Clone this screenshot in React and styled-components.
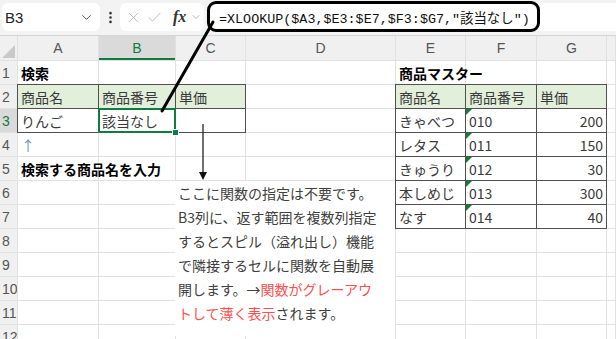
import React from 'react';
import styled, { createGlobalStyle } from 'styled-components';
import { ChevronDown, EllipsisVertical, X, Check } from 'lucide-react';

const GREEN = '#107c41';
const HEAD_FILL = '#e2efda';

const GlobalStyle = createGlobalStyle`
  html, body { margin: 0; padding: 0; background: #fff; }
  body { font-family: "Noto Sans CJK JP", "Noto Sans", sans-serif; }
`;

const Frame = styled.div`
  position: relative;
  width: 616px;
  height: 339px;
  overflow: hidden;
  background: #fff;
`;

// ---- formula bar ----
const TopBar = styled.div`
  display: flex;
  align-items: stretch;
  height: 36px;
  box-sizing: border-box;
  padding: 3px 0 4px 2px;
  background: #f3f3f3;
  border-bottom: 1px solid #d6d6d6;
`;

const NameBox = styled.div`
  width: 98px;
  display: flex;
  align-items: center;
  justify-content: space-between;
  padding: 0 6px 0 3px;
  box-sizing: border-box;
  background: #fff;
  border-radius: 6px;
  font-family: "Liberation Sans", Arial, sans-serif;
  font-size: 15px;
  color: #222;
`;

const Divider = styled.div`
  width: 20px;
  display: flex;
  align-items: center;
  justify-content: center;
  color: #333;
`;

const FxBox = styled.div`
  width: 84px;
  display: flex;
  align-items: center;
  gap: 4px;
  padding-left: 5px;
  box-sizing: border-box;
  background: #fff;
  border-radius: 6px;
  color: #b0b0b0;
`;

const Fx = styled.span`
  font-family: "Liberation Serif", serif;
  font-style: italic;
  font-weight: 700;
  font-size: 16px;
  color: #333;
  margin-left: 6px;
`;

const FormulaBar = styled.div`
  flex: 1;
  margin-left: 3px;
  display: flex;
  align-items: center;
  background: #fff;
  border-radius: 6px 0 0 6px;
`;

const FormulaText = styled.div`
  width: 333px;
  height: 31px;
  margin: -1px 0 0 0;
  box-sizing: border-box;
  border: 3px solid #000;
  border-radius: 9px;
  display: flex;
  align-items: center;
  padding-left: 9px;
  font-family: "Liberation Mono", "Noto Sans CJK JP", monospace;
  font-size: 13.4px;
  color: #111;
  white-space: nowrap;
`;

// ---- sheet ----
const Sheet = styled.div`
  display: grid;
  grid-template-columns: 17px 80px 76px 69px 149px 69px 70px 69px 8px;
  grid-template-rows: 24px repeat(12, 23px);
  gap: 1px;
  background: #e1e1e1;
`;

const Corner = styled.div`
  background: #f0f0f0;
  display: flex;
  align-items: flex-end;
  justify-content: flex-end;
  padding: 0 2px 2px 0;
  &::after {
    content: '';
    width: 0;
    height: 0;
    border-left: 13px solid transparent;
    border-bottom: 13px solid #c9c9c9;
  }
`;

const ColHead = styled.div`
  background: ${p => (p.$active ? '#dadada' : '#f0f0f0')};
  color: ${p => (p.$active ? GREEN : '#555')};
  box-shadow: ${p => (p.$active ? `inset 0 -2px 0 ${GREEN}` : 'none')};
  display: flex;
  align-items: center;
  justify-content: center;
  font-family: "Liberation Sans", Arial, sans-serif;
  font-size: 14px;
`;

const RowHead = styled.div`
  background: ${p => (p.$active ? '#dadada' : '#f0f0f0')};
  color: ${p => (p.$active ? GREEN : '#555')};
  display: flex;
  align-items: center;
  padding-left: 2px;
  font-family: "Liberation Sans", Arial, sans-serif;
  font-size: 14px;
  overflow: hidden;
`;

const Cell = styled.div`
  position: relative;
  z-index: ${p => p.$layer || 'auto'};
  background: ${p => p.$fill || '#fff'};
  display: flex;
  align-items: center;
  justify-content: ${p => (p.$right ? 'flex-end' : 'flex-start')};
  padding: 0 3px;
  font-size: 14px;
  line-height: 18px;
  font-weight: ${p => (p.$bold ? 700 : 400)};
  color: ${p => p.$color || (p.$bold ? '#000' : '#3a3a3a')};
  white-space: nowrap;
  outline: ${p =>
    p.$selected ? `2px solid ${GREEN}` : p.$boxed ? '1px solid #505050' : 'none'};
  outline-offset: ${p => (p.$selected ? '-1px' : '0')};

  ${p =>
    p.$flag &&
    `&::before {
      content: '';
      position: absolute;
      left: 0;
      top: 0;
      border-top: 6px solid #1a7a3a;
      border-right: 6px solid transparent;
    }`}

  ${p =>
    p.$selected &&
    `&::after {
      content: '';
      position: absolute;
      right: -4px;
      bottom: -4px;
      width: 5px;
      height: 5px;
      background: ${GREEN};
      border: 1px solid #fff;
    }`}
`;

// ---- annotation ----
const Overlay = styled.svg`
  position: absolute;
  left: 0;
  top: 0;
  width: 616px;
  height: 339px;
  pointer-events: none;
  z-index: 10;
`;

const Note = styled.div`
  position: absolute;
  left: 175px;
  top: 181px;
  width: 220px;
  height: 155px;
  box-sizing: border-box;
  padding-left: 3px;
  background: #fff;
  z-index: 9;
  font-family: "Noto Sans CJK JP", sans-serif;
  font-size: 14px;
  line-height: 24px;
  color: #404040;
`;

const NoteLine = styled.div`
  white-space: nowrap;
`;

const Red = styled.span`
  color: #ff4f4f;
`;

const COLS = ['A', 'B', 'C', 'D', 'E', 'F', 'G', 'H'];

const hdr = text => ({ text, fill: HEAD_FILL, boxed: true, layer: 1 });
const master = (name, code, price) => ({
  E: { text: name, boxed: true, layer: 1 },
  F: { text: code, boxed: true, layer: 1, flag: true },
  G: { text: price, boxed: true, layer: 1, right: true },
});

const rows = [
  { A: { text: '検索', bold: true }, E: { text: '商品マスター', bold: true, layer: 2 } },
  { A: hdr('商品名'), B: hdr('商品番号'), C: hdr('単価'), E: hdr('商品名'), F: hdr('商品番号'), G: hdr('単価') },
  {
    A: { text: 'りんご', boxed: true, layer: 1 },
    B: { text: '該当なし', boxed: true, selected: true, layer: 3 },
    C: { boxed: true, layer: 1 },
    ...master('きゃべつ', '010', '200'),
  },
  { A: { text: '↑', color: '#7d8ea3' }, ...master('レタス', '011', '150') },
  { A: { text: '検索する商品名を入力', bold: true, layer: 2 }, ...master('きゅうり', '012', '30') },
  master('本しめじ', '013', '300'),
  master('なす', '014', '40'),
  {}, {}, {}, {}, {},
];

export default function App() {
  return (
    <Frame>
      <GlobalStyle />
      <TopBar>
        <NameBox>
          <span>B3</span>
          <ChevronDown size={15} strokeWidth={1.5} color="#444" />
        </NameBox>
        <Divider>
          <EllipsisVertical size={15} strokeWidth={2.2} />
        </Divider>
        <FxBox>
          <X size={17} strokeWidth={1.2} />
          <Check size={17} strokeWidth={1.2} />
          <Fx>fx</Fx>
          <ChevronDown size={12} strokeWidth={1.5} color="#999" />
        </FxBox>
        <FormulaBar>
          <FormulaText>=XLOOKUP($A3,$E3:$E7,$F3:$G7,"該当なし")</FormulaText>
        </FormulaBar>
      </TopBar>

      <Sheet>
        <Corner />
        {COLS.map(c => (
          <ColHead key={c} $active={c === 'B'}>
            {c === 'H' ? '' : c}
          </ColHead>
        ))}
        {rows.map((row, i) => (
          <React.Fragment key={i}>
            <RowHead $active={i === 2}>{i + 1}</RowHead>
            {COLS.map(c => {
              const d = row[c] || {};
              return (
                <Cell
                  key={c}
                  $fill={d.fill}
                  $bold={d.bold}
                  $boxed={d.boxed}
                  $selected={d.selected}
                  $flag={d.flag}
                  $right={d.right}
                  $color={d.color}
                  $layer={d.layer}
                >
                  {d.text}
                </Cell>
              );
            })}
          </React.Fragment>
        ))}
      </Sheet>

      <Note>
        <NoteLine>ここに関数の指定は不要です。</NoteLine>
        <NoteLine>B3列に、返す範囲を複数列指定</NoteLine>
        <NoteLine>するとスピル（溢れ出し）機能</NoteLine>
        <NoteLine>で隣接するセルに関数を自動展</NoteLine>
        <NoteLine>
          開します。→<Red>関数がグレーアウ</Red>
        </NoteLine>
        <NoteLine>
          <Red>トして薄く表示</Red>されます。
        </NoteLine>
      </Note>

      <Overlay viewBox="0 0 616 339">
        <line x1="213" y1="22" x2="162" y2="111" stroke="#000" strokeWidth="3" strokeLinecap="round" />
        <line x1="203" y1="124" x2="203" y2="174" stroke="#222" strokeWidth="1.3" />
        <polygon points="199,172 207,172 203,180" fill="#111" />
      </Overlay>
    </Frame>
  );
}
